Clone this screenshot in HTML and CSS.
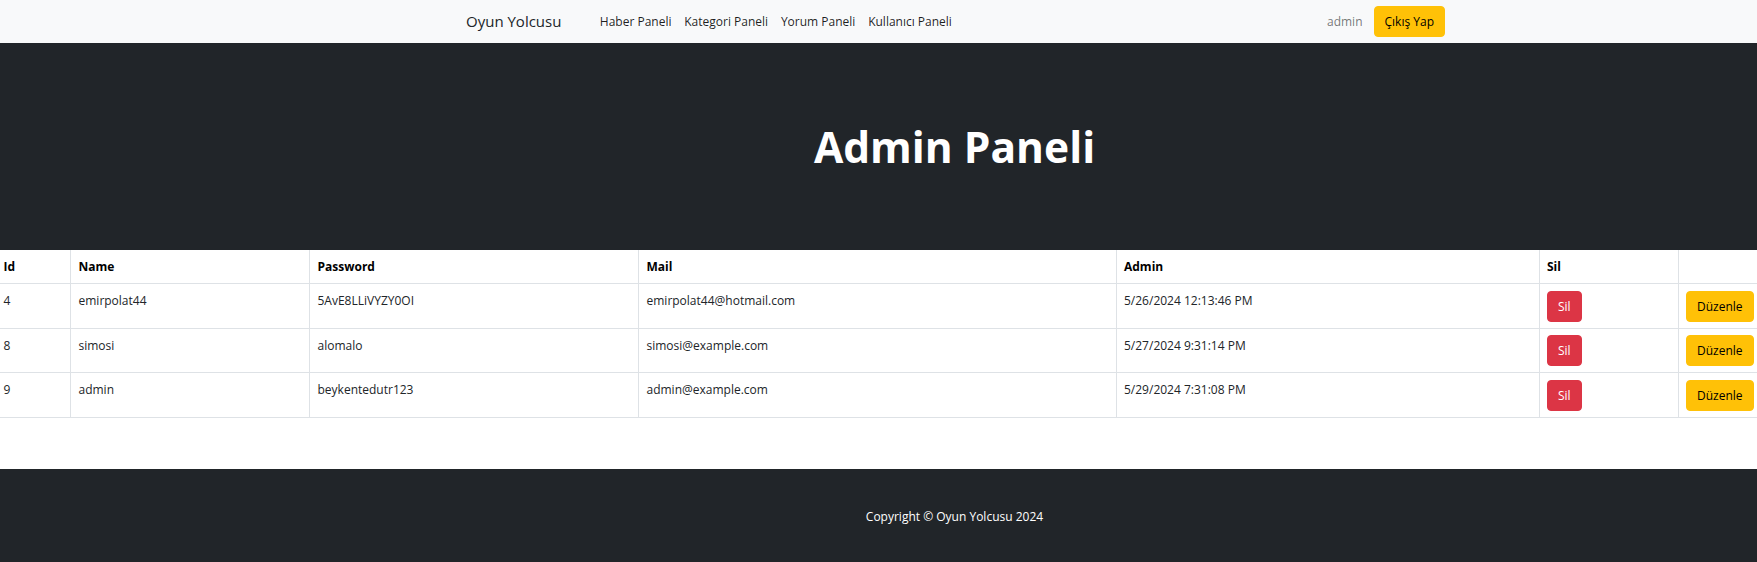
FILE: index.html
```html
<!DOCTYPE html>
<html lang="tr">
<head>
<meta charset="utf-8">
<title>Admin Paneli - Oyun Yolcusu</title>
<link rel="stylesheet" href="styles.css">
</head>
<body>
<nav class="navbar">
  <div class="nav-inner">
    <a class="brand" href="#">Oyun Yolcusu</a>
    <ul class="nav-links">
      <li><a href="#">Haber Paneli</a></li>
      <li><a href="#">Kategori Paneli</a></li>
      <li><a href="#">Yorum Paneli</a></li>
      <li><a href="#">Kullanıcı Paneli</a></li>
    </ul>
    <div class="nav-right">
      <span class="user">admin</span>
      <a class="btn btn-warning" href="#">Çıkış Yap</a>
    </div>
  </div>
</nav>

<header class="hero">
  <h1>Admin Paneli</h1>
</header>

<table class="users">
  <colgroup>
    <col class="c-id"><col class="c-name"><col class="c-pass"><col class="c-mail"><col class="c-admin"><col class="c-sil"><col class="c-edit">
  </colgroup>
  <thead>
    <tr><th>Id</th><th>Name</th><th>Password</th><th>Mail</th><th>Admin</th><th>Sil</th><th></th></tr>
  </thead>
  <tbody>
    <tr><td>4</td><td>emirpolat44</td><td>5AvE8LLiVYZY0OI</td><td>emirpolat44@hotmail.com</td><td>5/26/2024 12:13:46 PM</td><td class="act"><a class="btn btn-danger" href="#">Sil</a></td><td class="act"><a class="btn btn-warning" href="#">Düzenle</a></td></tr>
    <tr><td>8</td><td>simosi</td><td>alomalo</td><td>simosi@example.com</td><td>5/27/2024 9:31:14 PM</td><td class="act"><a class="btn btn-danger" href="#">Sil</a></td><td class="act"><a class="btn btn-warning" href="#">Düzenle</a></td></tr>
    <tr><td>9</td><td>admin</td><td>beykentedutr123</td><td>admin@example.com</td><td>5/29/2024 7:31:08 PM</td><td class="act"><a class="btn btn-danger" href="#">Sil</a></td><td class="act"><a class="btn btn-warning" href="#">Düzenle</a></td></tr>
  </tbody>
</table>

<footer class="footer">
  <p>Copyright © Oyun Yolcusu 2024</p>
</footer>
</body>
</html>
```

FILE: styles.css
```css
* { box-sizing: border-box; }
html, body { margin: 0; padding: 0; }
body {
  font-family: "Open Sans", "Noto Sans", sans-serif;
  font-size: 12px;
  line-height: 1.5;
  color: #212529;
  background: #fff;
  overflow-x: hidden;
}
a { text-decoration: none; }

.navbar {
  height: 43px;
  background: #f8f9fa;
  display: flex;
  align-items: center;
}
.nav-inner {
  margin-left: 466px;
  width: 979px;
  display: flex;
  align-items: center;
}
.brand {
  font-size: 15px;
  color: #212529;
  margin-right: 32px;
}
.nav-links {
  display: flex;
  list-style: none;
  margin: 0;
  padding: 0;
  flex: 1;
}
.nav-links a {
  display: block;
  padding: 0 6.4px;
  color: rgba(0, 0, 0, 0.88);
  font-size: 12px;
}
.nav-right {
  display: flex;
  align-items: center;
  gap: 11px;
}
.user { color: rgba(0, 0, 0, 0.55); font-size: 12px; }

.btn {
  display: inline-block;
  height: 31px;
  line-height: 29px;
  padding: 0 10px;
  border: 1px solid transparent;
  border-radius: 4px;
  font-size: 12px;
  text-align: center;
}
.btn-warning { background: #ffc107; border-color: #ffc107; color: #000; }
.btn-danger { background: #dc3545; border-color: #dc3545; color: #fff; }

.hero {
  height: 207px;
  background: #212529;
  display: flex;
  align-items: center;
  justify-content: center;
  padding-left: 152px;
}
.hero h1 {
  margin: 0;
  color: #fff;
  font-size: 42.5px;
  font-weight: 700;
  line-height: 1.2;
}

.users {
  width: 100%;
  table-layout: fixed;
  border-collapse: collapse;
}
.c-id { width: 70.5px; }
.c-name { width: 239px; }
.c-pass { width: 329px; }
.c-mail { width: 477.5px; }
.c-admin { width: 423px; }
.c-sil { width: 139px; }
.c-edit { width: 79px; }

.users th, .users td {
  border: 1px solid #dee2e6;
  padding: 8px 7.5px 6px;
  text-align: left;
  vertical-align: top;
  white-space: nowrap;
  overflow: hidden;
}
.users th { font-weight: 700; color: #000; padding-top: 7.5px; padding-bottom: 7.5px; }
.users td.act { padding-top: 6.5px; }
.users tr > :first-child { border-left: 0; padding-left: 3.5px; }
.users tr > :last-child { border-right: 0; padding-right: 0; }
.users thead tr > * { border-top: 0; }
.users td { color: #212529; }

.footer {
  margin-top: 51px;
  background: #212529;
  padding: 38px 0 40px;
  padding-left: 152px;
  text-align: center;
}
.footer p { margin: 0; color: #fff; font-size: 12px; line-height: 19px; }
```
